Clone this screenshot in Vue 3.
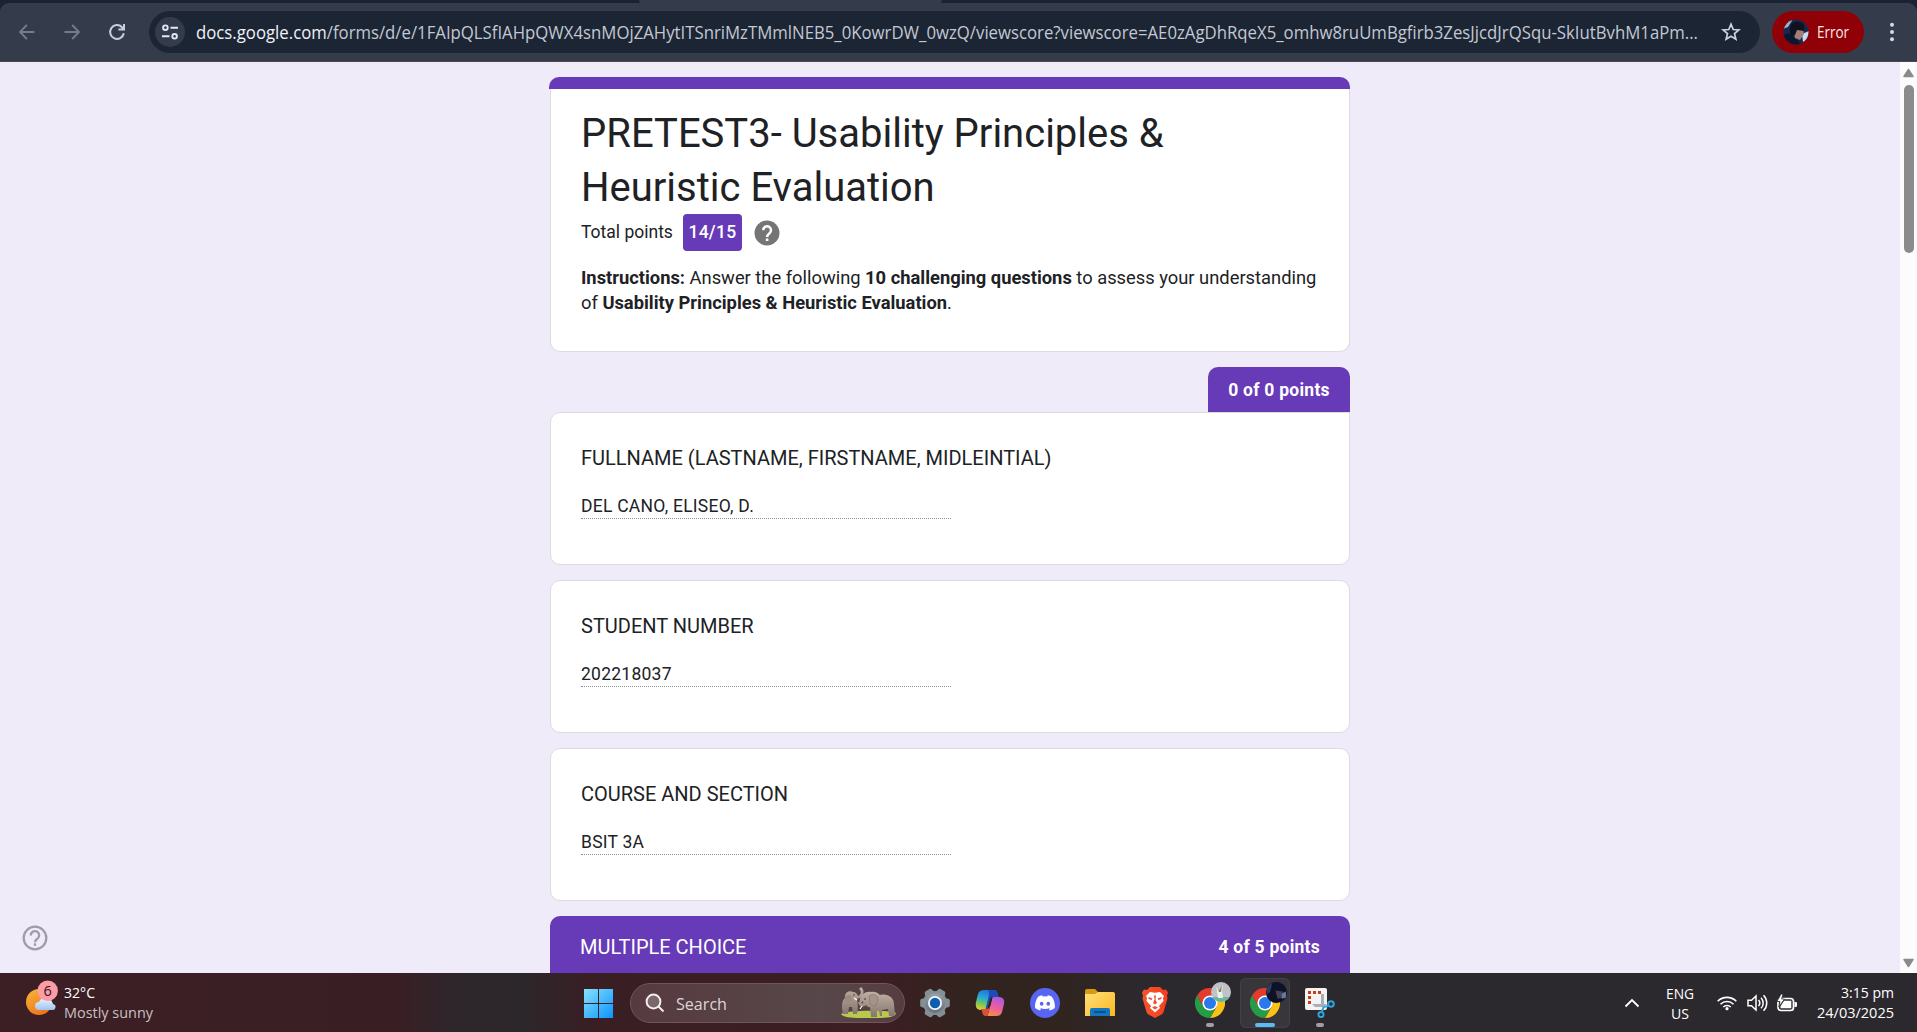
<script setup>
import { h } from 'vue'

// Single line of text fitted to a fixed advance width.
const FitText = (p) =>
  h('svg', { width: p.w, height: p.h, style: 'display:block;overflow:visible;flex:none' }, [
    h('text', {
      x: 0, y: p.base, textLength: p.w, lengthAdjust: 'spacingAndGlyphs',
      'font-size': p.size, fill: p.fill || '#fff',
      'font-family': '"Open Sans","Noto Sans",sans-serif'
    }, p.parts ? p.parts.map((s, i) => h('tspan', { fill: p.fills[i] }, s)) : p.text)
  ])
FitText.props = ['w', 'h', 'base', 'size', 'fill', 'text', 'parts', 'fills']

const url = [
  'docs.google.com',
  '/forms/d/e/1FAIpQLSfIAHpQWX4snMOjZAHytITSnriMzTMmlNEB5_0KowrDW_0wzQ/viewscore?viewscore=AE0zAgDhRqeX5_omhw8ruUmBgfirb3ZesJjcdJrQSqu-SkIutBvhM1aPm...'
]
const questions = [
  { label: 'FULLNAME (LASTNAME, FIRSTNAME, MIDLEINTIAL)', answer: 'DEL CANO, ELISEO, D.' },
  { label: 'STUDENT NUMBER', answer: '202218037' },
  { label: 'COURSE AND SECTION', answer: 'BSIT 3A' }
]
const teeth = [0, 60, 120, 180, 240, 300]
</script>

<template>
  <div class="screen">
    <header class="browser">
      <div class="tabs"><i></i></div>
      <div class="toolbar">
        <svg class="back" width="20" height="20" viewBox="0 0 20 20" fill="none" stroke="#747c8b" stroke-width="1.8"><path d="M17.5 10H3M9.8 3 3 10l6.8 7" /></svg>
        <svg class="fwd" width="20" height="20" viewBox="0 0 20 20" fill="none" stroke="#747c8b" stroke-width="1.8"><path d="M2.5 10H17M10.2 3 17 10l-6.8 7" /></svg>
        <svg class="reload" width="20" height="20" viewBox="0 0 20 20" fill="none" stroke="#c9cedb" stroke-width="2"><path d="M16.8 11.2A6.9 6.9 0 1 1 15 5.2l1.6 1.7M17 2v5.6h-5.6" /></svg>
        <div class="omnibox">
          <span class="site">
            <svg width="18" height="18" viewBox="0 0 18 18" fill="none" stroke="#e3e8f2" stroke-width="1.9"><circle cx="4.4" cy="4.7" r="2.3" /><path d="M9.5 4.7H17M1 13.3h7.5" /><circle cx="13.6" cy="13.3" r="2.3" /></svg>
          </span>
          <FitText :w="1502" :h="42" :base="28" :size="18" :parts="url" :fills="['#eef1f7', '#c3c8d2']" />
          <svg class="star" width="20" height="20" viewBox="0 0 20 20" fill="none" stroke="#cdd3df" stroke-width="1.7" stroke-linejoin="miter"><path d="m10 2.200 2.200 5.300 5.700.4-4.400 3.700 1.400 5.600L10 14.200l-4.900 3 1.400-5.600L2.100 7.900l5.700-.4z" /></svg>
        </div>
        <div class="profile">
          <svg width="26" height="26" viewBox="0 0 26 26"><defs><clipPath id="av0"><circle cx="13" cy="13" r="12.5" /></clipPath></defs><g clip-path="url(#av0)"><path fill="#16294d" d="M0 0h26v26H0z" /><path fill="#9fb4cc" d="M2 0h8L5 8 0 10z" /><path fill="#c8dcf4" d="m19 15 7-3v8l-6 3z" /><path fill="#a77d78" d="M10 9h10l1 6-4 6-5-2z" /><path fill="#11121f" d="M7 12C6 4 12 1 17 3c5 1 5 6 4 9l-7-1-2 5-3 1z" /><path fill="#0b1630" d="m0 16 8-2 4 6 4 2 1 4H0z" /></g></svg>
          <FitText :w="32" :h="42" :base="26.5" :size="15.5" text="Error" fill="#ffe9e9" />
        </div>
        <svg class="dots" width="6" height="20" fill="#d5dae6"><circle cx="3" cy="2.7" r="2" /><circle cx="3" cy="10" r="2" /><circle cx="3" cy="17.3" r="2" /></svg>
      </div>
    </header>

    <main class="page">
      <div class="help">
        <svg width="26" height="26" viewBox="0 0 26 26" fill="none" stroke="#a09ba9" stroke-width="2.3"><circle cx="13" cy="13" r="11.3" /><path d="M8.800 10.500a4.200 4.200 0 1 1 6.700 3.200C14 14.800 13 15.300 13 17.200" /><path d="M13 18.300v2.500" /></svg>
      </div>
      <div class="form">
        <section class="card head">
          <div class="strip"></div>
          <h1>PRETEST3- Usability Principles &amp; Heuristic Evaluation</h1>
          <div class="total">
            <span>Total points</span><b>14/15</b>
            <svg width="26" height="26" viewBox="0 0 26 26"><circle cx="13" cy="13" r="12.5" fill="#757575" /><path d="M9.200 10.200a3.900 3.900 0 1 1 6.300 3.100C14 14.500 13.100 15 13.100 17" fill="none" stroke="#fff" stroke-width="2.5" /><path d="M11.800 18.500h2.600v2.600h-2.600z" fill="#fff" /></svg>
          </div>
          <p><b>Instructions:</b> Answer the following <b>10 challenging questions</b> to assess your understanding of <b>Usability Principles &amp; Heuristic Evaluation</b>.</p>
        </section>
        <div class="tag">0 of 0 points</div>
        <section v-for="(q, i) in questions" :key="q.label" class="card question" :class="{ first: i === 0 }">
          <h2>{{ q.label }}</h2>
          <div class="answer">{{ q.answer }}</div>
        </section>
        <section class="section"><span>MULTIPLE CHOICE</span><b>4 of 5 points</b></section>
      </div>
      <div class="scroll">
        <svg width="17" height="16"><path d="M8.500 7.500 13 14.500H4z" fill="#8b8b8b" stroke="#8b8b8b" stroke-width="1.5" stroke-linejoin="round" /></svg>
        <i></i>
        <svg class="down" width="17" height="16"><path d="M8.500 9.500 13 2.500H4z" fill="#8b8b8b" stroke="#8b8b8b" stroke-width="1.5" stroke-linejoin="round" /></svg>
      </div>
    </main>

    <footer class="taskbar">
      <div class="weather">
        <svg width="36" height="42" viewBox="0 0 36 42">
          <defs>
            <linearGradient id="sun" x1="0" y1="0" x2=".6" y2="1"><stop offset="0" stop-color="#f6b93b" /><stop offset="1" stop-color="#ee7416" /></linearGradient>
            <linearGradient id="cld" x1="0" y1="0" x2="0" y2="1"><stop offset="0" stop-color="#eaf3ff" /><stop offset="1" stop-color="#9fc3f2" /></linearGradient>
          </defs>
          <circle cx="15" cy="23" r="13" fill="url(#sun)" />
          <path d="M15 31a4 4 0 0 1 0-8 6 6 0 0 1 10-2 5 5 0 0 1 4 4 3 3 0 0 1-1 6z" fill="url(#cld)" />
          <circle cx="23.7" cy="11.7" r="10.2" fill="#fd9ca6" />
          <text x="23.7" y="17" text-anchor="middle" font-size="14.5" fill="#2d1418" font-family="Open Sans, sans-serif">6</text>
        </svg>
        <div class="wtext">
          <FitText :w="31" :h="20" :base="15" :size="15" text="32°C" />
          <FitText :w="89" :h="20" :base="15" :size="15" text="Mostly sunny" fill="#c9c0c2" />
        </div>
      </div>

      <svg class="win" width="29" height="29" viewBox="0 0 29 29"><defs><linearGradient id="wn" gradientUnits="userSpaceOnUse" x1="0" y1="0" x2="29" y2="29"><stop offset="0" stop-color="#86e2ff" /><stop offset="1" stop-color="#0d93fb" /></linearGradient></defs><path fill="url(#wn)" d="M0 0h14v14H0zM15 0h14v14H15zM0 15h14v14H0zM15 15h14v14H15z" /></svg>

      <div class="search">
        <svg width="20" height="20" viewBox="0 0 20 20" fill="#7b676b" stroke="#f2edee" stroke-width="2"><circle cx="8.5" cy="8.5" r="6.9" /><path d="m13.500 13.500 5 5" /></svg>
        <FitText :w="51" :h="40" :base="26.5" :size="17" text="Search" fill="#ded6d8" />
        <svg class="elephants" width="57" height="32" viewBox="0 0 57 32">
          <defs><linearGradient id="el" x1="0" y1="0" x2="0" y2="1"><stop offset="0" stop-color="#c0b0a3" /><stop offset="1" stop-color="#85756c" /></linearGradient></defs>
          <path d="M1 27c4-4 50-4 55-1-1 5-12 5-27 5C14 31 3 31 1 27z" fill="#b9c94e" />
          <path d="M3 27c-2-8-1-14 2-16C4 6 9 3 13 5c3 0 4 2 5 4 3-1 4-5 1-7l2-2c5 4 2 11-4 12 1 5 1 10 0 15h-4l-1-7-3 0-1 7z" fill="url(#el)" />
          <path d="M20 17c-2-8 5-13 11-12 4-1 7 1 9 3 8-2 14 3 14 9l1 12h-6l-1-7-6 1v6h-2l-1-5-2 0v6h-6l-1-10c-2 1-3-1-4-2-3 3-7 2-8-3h3c1 3 3 1 2-1z" fill="url(#el)" />
          <path d="M29 9c6-4 11 1 8 7-2 4-5 3-7 0z" fill="#a59488" stroke="#86766c" stroke-width=".7" />
          <path d="M5 10c3-4 7-2 7 2s-5 5-7 2z" fill="#9c8c80" />
          <path d="m22 19-2 3M14 11l3 2" stroke="#fff" stroke-width="1.2" />
          <circle cx="25" cy="12" r=".8" fill="#2b2420" /><circle cx="14" cy="8" r=".7" fill="#2b2420" />
        </svg>
      </div>

      <div class="apps">
        <span class="app"><svg width="30" height="30" viewBox="-15 -15 30 30"><defs><linearGradient id="gr" x1="0" y1="0" x2="0" y2="1"><stop offset="0" stop-color="#96a0a6" /><stop offset="1" stop-color="#66717a" /></linearGradient></defs><circle r="12" fill="#7f8a92" /><path v-for="t in teeth" :key="t" d="m-5.500-9 1.500-4.700q.3-1.100 1.300-1.100h5.400q1 0 1.300 1.100L5.500-9z" fill="#838e95" :transform="`rotate(${t + 30})`" /><circle r="10" fill="url(#gr)" /><circle r="7" fill="#f4f8fb" /><circle r="5.2" fill="#0e5eb0" /></svg></span>
        <span class="app"><svg width="30" height="28" viewBox="0 0 30 28"><defs><linearGradient id="c1" x1=".5" y1="0" x2=".2" y2="1"><stop offset="0" stop-color="#2273d8" /><stop offset=".4" stop-color="#27a9d8" /><stop offset=".7" stop-color="#73c75a" /><stop offset="1" stop-color="#f2cd27" /></linearGradient><linearGradient id="c2" x1=".7" y1="0" x2=".3" y2="1"><stop offset="0" stop-color="#a95be0" /><stop offset=".5" stop-color="#ec5c9f" /><stop offset="1" stop-color="#f8913f" /></linearGradient></defs><path d="M13 1h6c2.500 0 3 1.500 3.500 3l1 4h-4c-3 0-4 1-5 4l-2 9H6c-4 0-6-3-5-8l2-8c1-3 3-4 6-4z" fill="url(#c1)" /><path d="M17 27h-6c-2.500 0-3-1.500-3.500-3l-1-4h4c3 0 4-1 5-4l2-8H24c4 0 6 3 5 7l-2 8c-1 3-3 4-6 4z" fill="url(#c2)" /><path d="M13 1h6c2.500 0 3 1.500 3.500 3l1 4h-4c-3 0-4 1-5 4l-2.500 8h-1.500l3-12c.6-3 1-5-.5-7z" fill="#1d4bb8" /><path d="M14.500 12 12 20H6.500l1 4c.5 1.500 1 3 3.500 3h1.500l3-11 2-8c-2 0-2.500 2-3 4z" fill="#2b211f" /><path d="M6.500 20h4.500c3 0 4-2 4.500-4l-3 11H11c-2.500 0-3-1.500-3.500-3z" fill="#dd4f36" /></svg></span>
        <span class="app"><svg width="30" height="30" viewBox="0 0 30 30"><circle cx="15" cy="15" r="15" fill="#5865f2" /><path transform="translate(5 5) scale(.83)" fill="#fff" d="M20.317 4.370a19.800 19.800 0 0 0-4.885-1.515l-.62 1.250a18.300 18.300 0 0 0-5.487 0l-.63-1.250A19.700 19.700 0 0 0 3.677 4.370C.533 9.046-.32 13.580.1 18.058a19.900 19.900 0 0 0 5.993 3.030l1.230-1.995-1.850-.9.360-.29a14 14 0 0 0 12.330 0l.37.290-1.870.9 1.220 1.995a19.800 19.800 0 0 0 6.003-3.030c.5-5.177-.838-9.674-3.549-13.690zM8.020 15.330c-1.183 0-2.157-1.085-2.157-2.419s.956-2.419 2.157-2.419c1.210 0 2.176 1.095 2.157 2.420 0 1.333-.956 2.418-2.157 2.418zm7.975 0c-1.183 0-2.157-1.085-2.157-2.419s.955-2.419 2.157-2.419c1.210 0 2.176 1.095 2.157 2.420 0 1.333-.946 2.418-2.157 2.418z" /></svg></span>
        <span class="app"><svg width="30" height="27" viewBox="0 0 30 27"><defs><linearGradient id="fo" x1="0" y1="0" x2="1" y2="1"><stop offset="0" stop-color="#ffe07a" /><stop offset="1" stop-color="#fbb820" /></linearGradient></defs><path d="M0 6V2q0-2 2-2h8l3 3-3 4z" fill="#d99a12" /><path d="M0 5h10l3-2h15q2 0 2 2v22H0z" fill="url(#fo)" /><path d="M5 27v-6q0-2 2-2h16q2 0 2 2v6z" fill="#1576c0" /><path d="M9 22h12v2H9z" fill="#0b4f8c" /></svg></span>
        <span class="app"><svg width="26" height="31" viewBox="0 0 26 31"><defs><linearGradient id="br" x1="0" y1="0" x2="1" y2="0"><stop offset="0" stop-color="#f1562b" /><stop offset="1" stop-color="#fb3b1d" /></linearGradient></defs><path d="M8 0h10l3 3 3-.5 2 3-1 3 .5 3-4 13.500q-.5 1.500-2 2.500L13 31l-6.500-3.500q-1.500-1-2-2.500L.5 11.500 1 8.500l-1-3 2-3L5 3z" fill="url(#br)" /><path d="m8 5 5 .8L18 5l4 4-1 2 .5 3-4.500 5 1 2-5 4.500L8 21l1-2-4.500-5 .5-3-1-2z" fill="#fff" /><path d="m6.500 10 4 1.500-1 1.500-3-1zM19.500 10l-4 1.500 1 1.500 3-1zM12 8.500h2l-.5 4 1.500 3.500-2 1.500-2-1.500 1.500-3.500zM10 20.500l3-1.500 3 1.500-3 2z" fill="#f4502c" /></svg></span>
        <span v-for="n in 2" :key="n" class="app run" :class="{ active: n === 2 }">
          <svg class="chrome" width="30" height="30" viewBox="-15 -15 30 30"><path d="M-13-7.500A15 15 0 0 1 13-7.500H0L-6.500 3.750z" fill="#e33b2e" /><path d="M13-7.500A15 15 0 0 1 0 15L6.500 3.750 0-7.500z" fill="#fbc116" /><path d="M0 15A15 15 0 0 1-13-7.500L-6.500 3.750H6.500z" fill="#269c46" /><circle r="7.6" fill="#fff" /><circle r="6" fill="#2a79ec" /></svg>
          <svg v-if="n === 1" class="avatar" width="20" height="20" viewBox="0 0 20 20"><defs><clipPath id="av1"><circle cx="10" cy="10" r="10" /></clipPath></defs><g clip-path="url(#av1)"><path d="M0 0h20v20H0z" fill="#bfc3c8" /><path d="M0 15h20v5H0z" fill="#66b89c" /><path d="m5.500 5 2.500 2 4-3-1 5 1 7H7z" fill="#f0efe8" /><path d="m6 4 2 4 3-4-1 6H8z" fill="#8c8058" /></g></svg>
          <svg v-else class="avatar" width="21" height="21" viewBox="0 0 20 20"><defs><clipPath id="av2"><circle cx="10" cy="10" r="10" /></clipPath></defs><g clip-path="url(#av2)"><path d="M0 0h20v20H0z" fill="#0c1329" /><path d="m0 5 6-4-2 8-3 3z" fill="#293e63" /><path d="m9 8 7 1-1 6-4 1z" fill="#4a4053" /><path d="m15 11 4-2v6l-4 1z" fill="#647a9f" /></g></svg>
          <i></i>
        </span>
        <span class="app run snip"><svg width="30" height="30" viewBox="0 0 30 30"><rect width="22" height="22" rx="2" fill="#f3f3f3" /><path d="M4.500 16V4.500H17" fill="none" stroke="#c83e16" stroke-width="3" stroke-dasharray="3 2" /><path d="M16 6h3v14l-3-3zM7 16h15l-4 3h-8z" fill="#a8afb5" /><g fill="none" stroke="#2ea3df" stroke-width="2"><circle cx="26" cy="16" r="2.8" /><circle cx="16" cy="26.5" r="2.6" /><path d="m23 18-4.500 1-1.500 5" /></g></svg><i></i></span>
      </div>

      <div class="tray">
        <svg class="chev" width="16" height="10" fill="none" stroke="#fff" stroke-width="1.8"><path d="m1.500 8.500 6.500-6.500 6.500 6.500" /></svg>
        <div class="lang">
          <FitText :w="28" :h="20" :base="15.5" :size="15" text="ENG" />
          <FitText :w="18" :h="20" :base="15.5" :size="15" text="US" />
        </div>
        <svg class="wifi" width="20" height="16" viewBox="0 0 20 16" fill="none" stroke="#fff" stroke-width="1.6"><path d="M.7 6.200a13.200 13.200 0 0 1 18.600 0M3.500 9.200a9.200 9.200 0 0 1 13 0M6.300 12a5.200 5.200 0 0 1 7.400 0" /><circle cx="10" cy="13.7" r="1.6" fill="#fff" stroke="none" /></svg>
        <svg class="vol" width="21" height="18" viewBox="0 0 21 18" fill="none" stroke="#fff" stroke-width="1.5"><path d="M1 6.200h3.500L9 2v14l-4.500-4.200H1zM11.500 6a4.500 4.500 0 0 1 0 6M14 3.700a7.500 7.500 0 0 1 0 10.600M16.500 1.200a11 11 0 0 1 0 15.600" /></svg>
        <svg class="bat" width="21" height="18" viewBox="0 0 21 18"><rect x="1" y="4.5" width="15.5" height="12" rx="3" fill="none" stroke="#fff" stroke-width="1.7" /><path d="M17.500 8h1.300q1.200 0 1.200 1.200v2.600q0 1.200-1.200 1.200h-1.300zM7 6.800h7.300v7.400H3.500v-2z" fill="#fff" /><path d="M4 0 0 7.500h3L1.800 13 7.500 5H4.600L6 0z" fill="#fff" stroke="#2b292e" stroke-width=".8" /></svg>
        <div class="clock">
          <FitText :w="53" :h="20" :base="15" :size="15" text="3:15 pm" />
          <FitText :w="77" :h="20" :base="15" :size="15" text="24/03/2025" />
        </div>
      </div>
    </footer>
  </div>
</template>

<style>
body { margin: 0; overflow: hidden; }
</style>

<style scoped>
.screen { width: 1917px; height: 1032px; display: flex; flex-direction: column; overflow: hidden; font-family: Roboto, "Liberation Sans", sans-serif; color: #202124; }
svg { flex: none; display: block; }
.browser { flex: none; height: 62px; background: #1a2233; display: flex; flex-direction: column; }
.tabs { height: 3px; display: flex; }
.tabs i { margin-left: 639px; width: 303px; background: #343c4c; border-radius: 0 0 4px 4px; }
.toolbar { flex: 1; box-sizing: border-box; background: #343c4c; border-bottom: 1px solid #4c4653; border-radius: 9px 9px 0 0; display: flex; align-items: center; }
.back { margin-left: 16.5px; }
.fwd { margin-left: 25px; }
.reload { margin-left: 25px; }
.omnibox { margin-left: 22.5px; width: 1611px; height: 42px; border-radius: 21px; background: #1c2534; display: flex; align-items: center; }
.site { margin: 0 10.5px 0 6px; width: 30px; height: 30px; border-radius: 50%; background: #343c4c; display: flex; align-items: center; justify-content: center; }
.star { margin-left: 23px; }
.profile { margin-left: 12px; width: 92px; height: 42px; border-radius: 21px; background: #8f0007; display: flex; align-items: center; gap: 8px; padding-left: 11px; box-sizing: border-box; }
.dots { margin-left: 25px; }

.page { height: 911px; flex: none; background: #f0ebf8; display: flex; overflow: hidden; }
.help { flex: none; width: 549px; display: flex; align-items: flex-end; padding: 0 0 22px 22px; box-sizing: border-box; }
.form { flex: none; width: 801px; padding: 15px 0 0 1px; box-sizing: border-box; display: flex; flex-direction: column; }
.card { box-sizing: border-box; flex: none; width: 800px; background: #fff; border: 1px solid #dadce0; border-radius: 10px; padding: 0 30px; }
.head { height: 275px; border-top: 0; display: flex; flex-direction: column; }
.strip { flex: none; height: 12px; margin: 0 -31px 0 -32px; background: #673ab7; border-radius: 10px 10px 0 0; }
h1 { margin: 18px 0 0; font-size: 40px; line-height: 54px; font-weight: 400; }
.total { display: flex; align-items: center; height: 37px; margin-top: -1px; font-size: 17.5px; line-height: 37px; }
.total b { margin: 0 12px 0 10px; width: 59px; height: 37px; text-align: center; background: #673ab7; color: #fff; border-radius: 4px; font-weight: 500; letter-spacing: .25px; }
p { margin: 14px 0 0; font-size: 18.33px; line-height: 25px; }
p b { font-weight: 700; }
.tag { flex: none; align-self: flex-end; margin-top: 15px; width: 142px; height: 45px; line-height: 46px; text-align: center; background: #673ab7; color: #fff; border-radius: 10px 10px 0 0; font-size: 17.5px; font-weight: 700; letter-spacing: .25px; }
.question { height: 153px; margin-top: 15px; }
.question.first { margin-top: 0; border-top-right-radius: 0; }
h2 { margin: 30px 0 0; font-size: 20px; line-height: 30px; font-weight: 400; }
.answer { margin-top: 20px; width: 370px; height: 26px; line-height: 26px; box-sizing: border-box; border-bottom: 1px dotted #8d8d8d; font-size: 17.5px; letter-spacing: .25px; }
.section { flex: none; margin-top: 15px; height: 90px; width: 800px; box-sizing: border-box; padding: 16px 30px; line-height: 30px; background: #673ab7; color: #fff; border-radius: 10px 10px 0 0; display: flex; justify-content: space-between; font-size: 20px; }
.section b { font-size: 17.5px; font-weight: 700; letter-spacing: .25px; }
.scroll { margin-left: 550px; flex: none; width: 17px; background: #fcfcfc; display: flex; flex-direction: column; }
.scroll i { margin: 7px 0 0 4px; width: 10px; height: 168px; border-radius: 5px; background: #8b8b8b; }
.scroll .down { margin-top: auto; margin-bottom: 0; }

.taskbar { flex: none; height: 59px; display: flex; align-items: center; background: linear-gradient(90deg, #3c1f24 0, #391f24 400px, #2e262b 450px, #2c272b 520px, #391f24 590px, #3c1e23 880px, #33231f 960px, #30241f 1060px, #2b292e 1140px, #2b292e 100%); }
.weather { width: 560px; margin-left: 24px; display: flex; align-items: flex-start; height: 47px; gap: 3.5px; }
.wtext { padding-top: 4px; }
.win { margin-top: 2px; }
.search { margin: 1px 20px 0 17px; width: 275px; height: 40px; box-sizing: border-box; border-radius: 20px; background: linear-gradient(90deg, #573a3f, #57474a 70%, #563c40); border: 1px solid #6e565a; display: flex; align-items: center; padding-left: 13.5px; gap: 11px; }
.elephants { margin-left: 102px; }
.apps { display: flex; align-items: center; height: 50px; gap: 5px; margin-left: -15px; }
.app { position: relative; width: 50px; height: 50px; display: flex; align-items: center; justify-content: center; border-radius: 6px; box-sizing: border-box; }
.active { background: #38363b; box-shadow: inset 0 0 0 1px #434147; }
.avatar { position: absolute; left: 26px; top: 4px; }
.run i { position: absolute; left: 21px; bottom: 1px; width: 8px; height: 4px; border-radius: 2px; background: #a09fa1; }
.run.active i { left: 15px; width: 20px; background: #5cbcf0; }
.tray { margin-left: auto; margin-right: 23px; display: flex; align-items: center; height: 59px; }
.lang { display: flex; flex-direction: column; align-items: center; margin: 0 23px 0 26px; }
.vol { margin-left: 10px; margin-right: 9px; }
.clock { display: flex; flex-direction: column; align-items: flex-end; margin-left: 19px; }
</style>
